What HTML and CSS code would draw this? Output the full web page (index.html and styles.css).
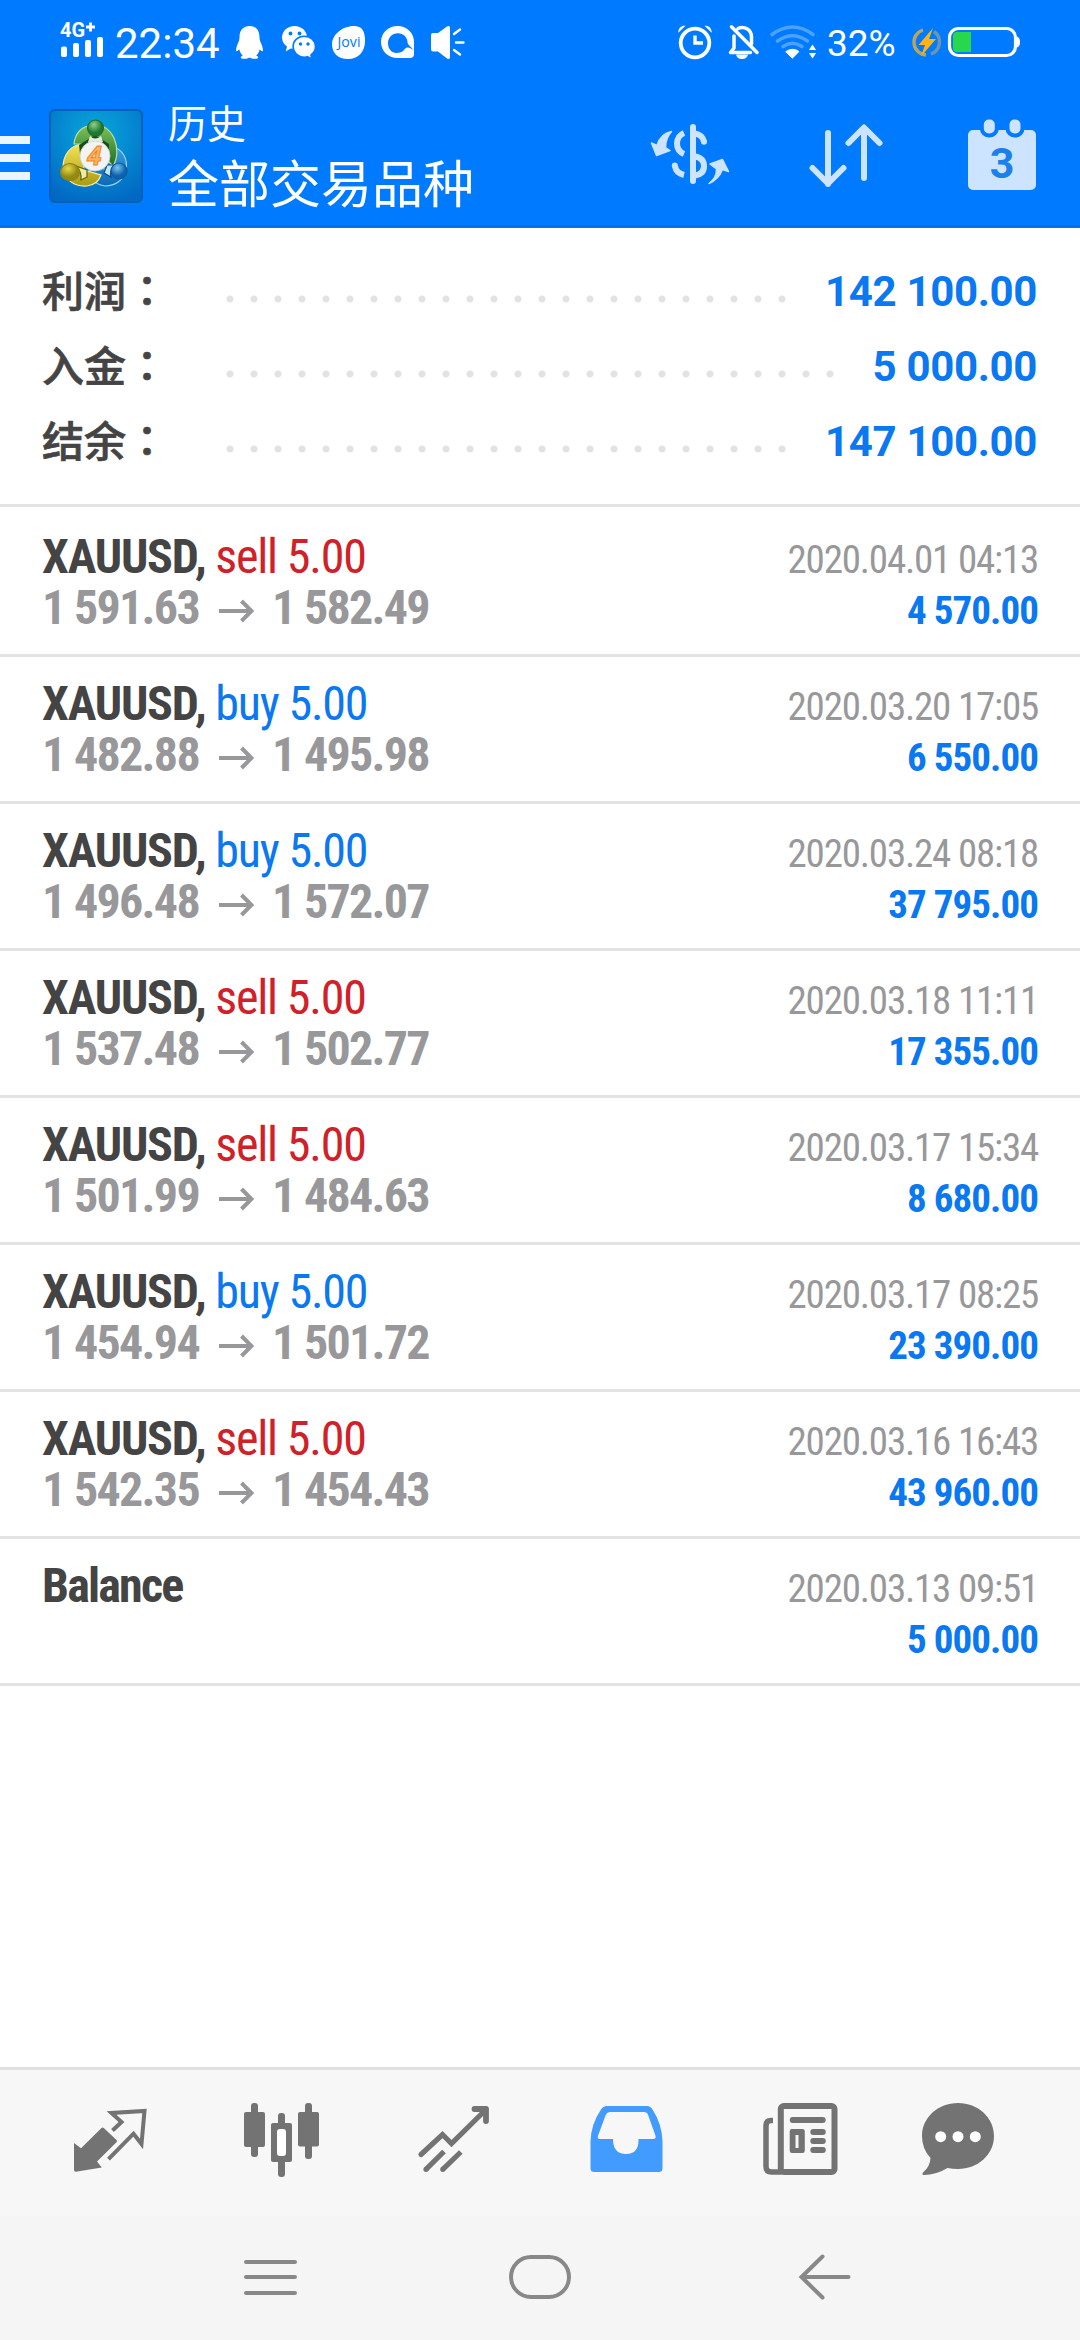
FILE: index.html
```html
<!DOCTYPE html>
<html lang="zh-CN">
<head>
<meta charset="utf-8">
<title>历史</title>
<link rel="stylesheet" href="styles.css">
</head>
<body>
<div class="screen">
<header class="header">
  <div class="status">
    <div class="status-group">
      <svg width="52" height="84" viewBox="60 0 52 84" fill="#fff">
        <text class="net" x="60" y="37">4G</text>
        <path d="M86 27h9M90.500 22.500v9" stroke="#fff" stroke-width="2.800"/>
        <rect x="61" y="46.500" width="6" height="10.500" rx="2"/><rect x="73" y="43" width="6" height="14" rx="2"/><rect x="85" y="40" width="6" height="17" rx="2"/><rect x="97" y="37" width="6" height="20" rx="2"/>
      </svg>
      <span class="clock">22:34</span>
      <svg width="46" height="84" viewBox="226 0 46 84" fill="#fff">
        <path d="M249.500 26c-7 0-10 5-10 11 0 2-.3 3-1 5-1.500 3-2.500 6-2.500 9 1 .8 2.200-.5 3.200-1.800.6 2.600 1.800 4.800 3.600 6.300-2.600 1-2.600 2.800-.3 3.200 2.600.3 5.400 0 7-1.200 1.600 1.200 4.400 1.500 7 1.200 2.300-.4 2.300-2.200-.3-3.200 1.800-1.500 3-3.700 3.600-6.300 1 1.300 2.200 2.600 3.200 1.800 0-3-1-6-2.500-9-.7-2-1-3-1-5 0-6-3-11-10-11z"/>
      </svg>
      <svg width="50" height="84" viewBox="272 0 50 84" fill="#fff">
        <path d="M294.500 26c-7 0-12.500 5-12.500 11.500 0 4 2 7 5 9l-1.300 5 5-3c1.200.3 2.500.5 3.800.5 7 0 12.500-5 12.500-11.500s-5.500-11.500-12.500-11.500z"/>
        <circle cx="290.500" cy="33.500" r="1.900" fill="#007aff"/><circle cx="299.500" cy="33.500" r="1.900" fill="#007aff"/>
        <path d="M304.300 36.200c6.300 0 11.200 4.600 11.200 10.400 0 3.500-1.800 6.400-4.500 8.400l1 4-4.300-2.200c-1.100.3-2.200.4-3.400.4-6.300 0-11.200-4.700-11.200-10.600s4.900-10.400 11.200-10.400z" stroke="#007aff" stroke-width="1.600"/>
        <circle cx="300.500" cy="44" r="1.700" fill="#007aff"/><circle cx="308" cy="44" r="1.700" fill="#007aff"/>
      </svg>
      <svg width="50" height="84" viewBox="322 0 50 84" fill="#fff">
        <path d="M354 26c8 0 11 5 11 15 0 11-7 18-17 18s-16-6-16-15 10-18 22-18z"/>
        <text class="jovi" x="337.500" y="46.500" textLength="23" lengthAdjust="spacingAndGlyphs">Jovi</text>
      </svg>
      <svg width="50" height="84" viewBox="372 0 50 84">
        <path d="M397.500 26c9.500 0 16.500 7 16.500 16v12q0 4-4 4h-12.500c-9.500 0-16.500-7-16.500-16s7-16 16.500-16z" fill="#fff"/>
        <path d="M400 52.500c-7 2-12-2.500-12-9.300 0-6 4.500-10 9.800-10 5.400 0 9.700 4 9.700 8.800 0 3 3 4 6.500 8.500-3-2.500-6.500-4.500-9.200-1.500-1.400 1.600-2.500 3-4.800 3.500z" fill="#007aff"/>
      </svg>
      <svg width="50" height="84" viewBox="422 0 50 84" fill="#fff">
        <path d="M433 33h5l9-6.500q3-1.500 3 1.500v29q0 3-3 1.500l-9-7h-5q-2 0-2-2v-14.500q0-2 2-2z"/>
        <path d="M454 34l6-4.500M456 42.500h7.500M454 50l6 4.500" stroke="#fff" stroke-width="2.400" stroke-linecap="round"/>
      </svg>
    </div>
    <div class="status-group">
      <svg width="48" height="84" viewBox="672 0 48 84" fill="none" stroke="#fff">
        <circle cx="695" cy="43" r="14.300" stroke-width="3.800"/>
        <path d="M695 35.500v7.500h8" stroke-width="3.400"/>
        <path d="M678.300 32c.5-4.500 3-6.600 7.200-6.200l-7.200 7zM711.700 32c-.5-4.500-3-6.600-7.200-6.200l7.200 7z" fill="#fff" stroke="none"/>
      </svg>
      <svg width="46" height="84" viewBox="720 0 46 84" fill="none" stroke="#fff" stroke-width="3.500" stroke-linecap="round" stroke-linejoin="round">
        <path d="M738 28.500c6-3 13.500 1 13.500 8.500v7M734 36v12l-3.500 4.500h20M731.500 26.800l25.500 25.700"/>
        <path d="M736 54.500h12q-1 4.500-6 4.500t-6-4.500z" fill="#fff" stroke="none"/>
      </svg>
      <svg width="58" height="84" viewBox="766 0 58 84" fill="none" stroke="#4da2ff" stroke-width="3.600" stroke-linecap="round">
        <path d="M772 34.500q20.500-15 41 0M777.500 41q15-10.500 30 0M783 46.500q9.500-6.500 19 0"/>
        <path d="M786 51.500q6.500-4.500 13 0l-6.500 6.500z" fill="#fff" stroke="#fff" stroke-width="1"/>
        <path d="M812.500 44.500l3.600 5.500h-7.200zM812.500 58.500l3.600-5.500h-7.200z" fill="#fff" stroke="none"/>
      </svg>
      <span class="percent">32%</span>
      <svg width="116" height="84" viewBox="906 0 116 84" fill="none">
        <path d="M923 30a12.800 12.800 0 0 0 3 25" stroke="#b9a55a" stroke-width="3.400"/>
        <path d="M934 31.500a12.800 12.800 0 0 1-3 22.500" stroke="#6f96a8" stroke-width="3.400"/>
        <path d="M933 28l-14.500 17h6.500l-4 11.500 15-17.500h-7z" fill="#ffb414"/>
        <rect x="949.500" y="28.500" width="66" height="27" rx="9" stroke="#fff" stroke-width="3.200"/>
        <path d="M957 32h14v20h-14q-4 0-4-4v-12q0-4 4-4z" fill="#28d74b"/>
        <path d="M1017 36.500q3 1 3 5.500t-3 5.500z" fill="#fff"/>
      </svg>
    </div>
  </div>
  <div class="toolbar">
    <div class="menu"><i></i><i></i><i></i></div>
    <svg class="logo" width="94" height="94" viewBox="0 0 94 94">
      <defs>
        <radialGradient id="bg" cx=".5" cy=".25" r=".8"><stop offset="0" stop-color="#08a8dc"/><stop offset="1" stop-color="#0268c4"/></radialGradient>
        <linearGradient id="gr" x2="0" y2="1"><stop offset="0" stop-color="#7fc25c"/><stop offset="1" stop-color="#1d6b26"/></linearGradient>
        <linearGradient id="ye" x2="0" y2="1"><stop offset="0" stop-color="#f4e455"/><stop offset="1" stop-color="#a89a14"/></linearGradient>
        <linearGradient id="bl" x2="0" y2="1"><stop offset="0" stop-color="#3b9fe0"/><stop offset="1" stop-color="#0c68b4"/></linearGradient>
        <radialGradient id="gh" cx=".4" cy=".3"><stop offset="0" stop-color="#8fd08a"/><stop offset="1" stop-color="#1f7a30"/></radialGradient>
        <radialGradient id="yh" cx=".4" cy=".3"><stop offset="0" stop-color="#e6d94c"/><stop offset="1" stop-color="#948a10"/></radialGradient>
        <radialGradient id="bh" cx=".4" cy=".3"><stop offset="0" stop-color="#7cc4f0"/><stop offset="1" stop-color="#0d63ae"/></radialGradient>
      </defs>
      <rect x="1" y="1" width="92" height="92" rx="5" fill="url(#bg)" stroke="#0560b8" stroke-width="2"/>
      <g stroke-width="1.200">
        <path d="M62 37c12 3 17 13 15 24-2 10-11 16-21 16-8-1-14-5-19-14l13-4 16 3z" fill="url(#bl)" stroke="#9ad4f5"/>
        <path d="M34 35c-13 1-20 11-20 24 1 12 12 19 24 18 7-1 12-5 14-11l-17-5z" fill="url(#ye)" stroke="#f7f0a0"/>
        <path d="M46 16c-14 0-20 9-21 19l9 0 26 18 4 4c5-8 5-19 1-28-4-8-10-13-19-13z" fill="url(#gr)" stroke="#b5dfa0"/>
        <path d="M30 36l16-10 14 9v14l-8 10-20-6z" fill="#14501c" stroke="none"/>
        <path d="M41 27q5 5 11 0l2 6q-8 3-15 0z" fill="#e2f0dc" stroke="none"/>
        <circle cx="46.500" cy="19" r="8" fill="url(#gh)" stroke="#1f6b2a"/>
        <path d="M27 57q6 6 5 14l6-3v-7z" fill="#f0eaa0" stroke="#5c640c"/>
        <path d="M66 56q-6 5-4 12l-7-4 3-8z" fill="#c4e4f8" stroke="#0b4c88"/>
        <ellipse cx="21" cy="63" rx="9.500" ry="8.500" fill="url(#yh)" stroke="#8d8414"/>
        <circle cx="70" cy="62" r="8" fill="url(#bh)" stroke="#0b5a9e"/>
      </g>
      <circle cx="46" cy="47" r="15" fill="#f3f3f3" stroke="#d2d2d2" stroke-width=".8"/>
      <text class="logo-num" x="45.500" y="56">4</text>
    </svg>
    <div class="titles">
      <div class="subtitle">历史</div>
      <div class="title">全部交易品种</div>
    </div>
    <div class="actions">
      <svg width="80" height="80" viewBox="650 115 80 80" fill="none" stroke="#cce4ff" stroke-width="6">
        <path d="M693 127v54" stroke-linecap="round"/>
        <path d="M695 133.500q8 1.500 9 8.500"/><circle cx="704" cy="141.800" r="3" fill="#cce4ff" stroke="none"/>
        <path d="M684 133q-7 3-7 10.500t7 10.500M695 156.500q9 1.500 9 9.500t-9 9.500M675 166q1 7 9 9"/><circle cx="674.800" cy="165.500" r="3" fill="#cce4ff" stroke="none"/>
        <path d="M671.500 131.500q-11 2-14.500 14l-5.500-2.500 5 12.500 13.500-5-4.500-3q0-9 6-16zM709 183.500q8-6 7.500-14.500l-6.500-5 12.500-4.500 6 12-6-2q-4 10-13.500 14z" fill="#cce4ff" stroke-width="1.500" stroke-linejoin="round"/>
      </svg>
      <svg width="76" height="80" viewBox="808 115 76 80" fill="none" stroke="#cce4ff" stroke-width="6" stroke-linecap="round" stroke-linejoin="round">
        <path d="M828 133v51M812.500 168l15.500 15.500 15.500-15.500M864 178v-50M848.500 143l15.500-15.500 15.500 15.500"/>
      </svg>
      <svg width="72" height="80" viewBox="966 115 72 80" fill="#cce4ff">
        <rect x="968" y="130" width="68" height="60" rx="5"/>
        <g stroke="#007aff" stroke-width="4"><rect x="981.800" y="117.500" width="15" height="18" rx="7"/><rect x="1007.500" y="117.500" width="15" height="18" rx="7"/></g>
        <text class="day" x="1002" y="177.500">3</text>
      </svg>
    </div>
  </div>
</header>

<section class="summary">
  <div class="sum-row"><span class="label">利润<span lang="zh-TW">：</span></span><span class="dots"></span><span class="sum-value">142 100.00</span></div>
  <div class="sum-row"><span class="label">入金<span lang="zh-TW">：</span></span><span class="dots"></span><span class="sum-value">5 000.00</span></div>
  <div class="sum-row"><span class="label">结余<span lang="zh-TW">：</span></span><span class="dots"></span><span class="sum-value">147 100.00</span></div>
</section>

<main class="deals">
  <article class="deal">
    <div class="line"><span class="symbol">XAUUSD, <span class="sell">sell 5.00</span></span><span class="date">2020.04.01 04:13</span></div>
    <div class="line"><span class="prices">1 591.63<svg class="arrow" viewBox="0 0 35 24"><path d="M0 12h32M22.500 2l10 10-10 10"/></svg>1 582.49</span><span class="profit">4 570.00</span></div>
  </article>
  <article class="deal">
    <div class="line"><span class="symbol">XAUUSD, <span class="buy">buy 5.00</span></span><span class="date">2020.03.20 17:05</span></div>
    <div class="line"><span class="prices">1 482.88<svg class="arrow" viewBox="0 0 35 24"><path d="M0 12h32M22.500 2l10 10-10 10"/></svg>1 495.98</span><span class="profit">6 550.00</span></div>
  </article>
  <article class="deal">
    <div class="line"><span class="symbol">XAUUSD, <span class="buy">buy 5.00</span></span><span class="date">2020.03.24 08:18</span></div>
    <div class="line"><span class="prices">1 496.48<svg class="arrow" viewBox="0 0 35 24"><path d="M0 12h32M22.500 2l10 10-10 10"/></svg>1 572.07</span><span class="profit">37 795.00</span></div>
  </article>
  <article class="deal">
    <div class="line"><span class="symbol">XAUUSD, <span class="sell">sell 5.00</span></span><span class="date">2020.03.18 11:11</span></div>
    <div class="line"><span class="prices">1 537.48<svg class="arrow" viewBox="0 0 35 24"><path d="M0 12h32M22.500 2l10 10-10 10"/></svg>1 502.77</span><span class="profit">17 355.00</span></div>
  </article>
  <article class="deal">
    <div class="line"><span class="symbol">XAUUSD, <span class="sell">sell 5.00</span></span><span class="date">2020.03.17 15:34</span></div>
    <div class="line"><span class="prices">1 501.99<svg class="arrow" viewBox="0 0 35 24"><path d="M0 12h32M22.500 2l10 10-10 10"/></svg>1 484.63</span><span class="profit">8 680.00</span></div>
  </article>
  <article class="deal">
    <div class="line"><span class="symbol">XAUUSD, <span class="buy">buy 5.00</span></span><span class="date">2020.03.17 08:25</span></div>
    <div class="line"><span class="prices">1 454.94<svg class="arrow" viewBox="0 0 35 24"><path d="M0 12h32M22.500 2l10 10-10 10"/></svg>1 501.72</span><span class="profit">23 390.00</span></div>
  </article>
  <article class="deal">
    <div class="line"><span class="symbol">XAUUSD, <span class="sell">sell 5.00</span></span><span class="date">2020.03.16 16:43</span></div>
    <div class="line"><span class="prices">1 542.35<svg class="arrow" viewBox="0 0 35 24"><path d="M0 12h32M22.500 2l10 10-10 10"/></svg>1 454.43</span><span class="profit">43 960.00</span></div>
  </article>
  <article class="deal">
    <div class="line"><span class="symbol balance">Balance</span><span class="date">2020.03.13 09:51</span></div>
    <div class="line"><span class="prices">&nbsp;</span><span class="profit">5 000.00</span></div>
  </article>
</main>

<nav class="tabs">
  <svg viewBox="21 2070 173 146">
    <path d="M74 2143l7 5.300 20.500-20.300q1.200-1 2.300 0l12.700 12q1 1.200 0 2.200l-19.500 19.300 4.800 6-26 4.300q-1.800 0-1.800-1.800z" fill="#737373"/>
    <path d="M112.500 2130.500l9-8.500-10-9 33-2-3 33-8-10.300-25 25.500" fill="none" stroke="#737373" stroke-width="4"/>
  </svg>
  <svg viewBox="194 2070 173 146" fill="#737373">
    <rect x="251" y="2103" width="7" height="54" rx="3"/><rect x="244" y="2112" width="21" height="35" rx="2"/>
    <rect x="278" y="2113" width="7" height="64" rx="3"/><rect x="271" y="2123" width="21" height="39" rx="2"/><rect x="277" y="2129" width="9" height="27" rx="3" fill="#fff"/>
    <rect x="305" y="2103" width="7" height="56" rx="3"/><rect x="298" y="2112" width="21" height="34.500" rx="2"/>
  </svg>
  <svg viewBox="367 2070 173 146" fill="none" stroke="#737373" stroke-width="5.200">
    <path d="M421 2154.500l21.500-20 9 9 34.500-34" stroke-linecap="round"/>
    <path d="M474.500 2109h11.500v12" stroke-width="5.800" stroke-linecap="round" stroke-linejoin="round"/>
    <path d="M426 2169.300l18-17.800M442.800 2169.300l18-17.300"/><path d="M426 2169.300h.01M442.800 2169.300h.01" stroke-linecap="round"/>
  </svg>
  <svg viewBox="540 2070 173 146">
    <path fill-rule="evenodd" fill="#429bff" d="M607 2106h40q3.500 0 5.500 3.500 9.500 14.500 10 32v27q0 3.500-4 3.500h-64q-4 0-4-3.500v-27q.5-17.500 10.500-32 2-3.500 6-3.500zM610 2112q-3 0-4.200 2.800l-7.600 20.400q-1.400 3.800 1.300 3.800h13.500q0 15 13 15t12.500-15h14.500q3.800 0 2.300-3.800l-7.300-20.400q-1-2.800-4-2.800z"/>
  </svg>
  <svg viewBox="713 2070 173 146" fill="#737373">
    <rect x="780.800" y="2106" width="53.700" height="66" rx="3" fill="none" stroke="#737373" stroke-width="6"/>
    <path d="M773 2120.500h-2q-5 0-5 5v41q0 5.500 5.500 5.500h10" fill="none" stroke="#737373" stroke-width="5.500"/>
    <rect x="789.700" y="2117" width="36" height="6" rx="3"/>
    <path fill-rule="evenodd" d="M792 2129h10.500q2.300 0 2.300 2.300v19.400q0 2.300-2.300 2.300h-10.500q-2.300 0-2.300-2.300v-19.400q0-2.300 2.300-2.300zM795.500 2135v13h3v-13z"/>
    <rect x="810.300" y="2129" width="15.500" height="6" rx="3"/><rect x="810.300" y="2138" width="15.500" height="6" rx="3"/><rect x="810.300" y="2147" width="15.500" height="6" rx="3"/>
  </svg>
  <svg viewBox="886 2070 173 146" fill="#737373">
    <path d="M958 2103c20 0 36 14.500 36 33s-16 33-36 33q-5.500 0-10.500-1-11.500 7-23.500 7-3-.5-.5-3 6.500-5.500 7-14-8.500-9-8.500-22c0-18.500 16-33 36-33z"/>
    <g fill="#fff"><circle cx="940.700" cy="2136.700" r="5.500"/><circle cx="958" cy="2136.700" r="5.500"/><circle cx="975.300" cy="2136.700" r="5.500"/></g>
  </svg>
</nav>

<div class="sysnav">
  <svg viewBox="0 0 60 50"><path d="M7 10h49M7 25h49M7 41h49"/></svg>
  <svg viewBox="0 0 70 50"><rect x="6" y="5" width="58" height="40" rx="20"/></svg>
  <svg viewBox="0 0 60 50"><path d="M26.500 4.500l-21 20.500 21 20.500M6 25h46.500"/></svg>
</div>
</div>
</body>
</html>
```
FILE: styles.css
```css
* { box-sizing: border-box; }
body { margin: 0; background: #fff; }
svg { display: block; flex: none; }

.screen {
  display: flex;
  flex-direction: column;
  width: 1080px;
  height: 2340px;
  overflow: hidden;
  font-family: Roboto, "Noto Sans CJK SC", sans-serif;
}

/* Header */
.header {
  height: 228px;
  background: #007aff;
  border-bottom: 3px solid #0870e0;
  color: #fff;
}
.status {
  display: flex;
  justify-content: space-between;
  height: 84px;
  padding: 0 58px 0 60px;
}
.status-group { display: flex; align-items: center; }
.net { font: 700 20px Roboto, sans-serif; }
.jovi { font: 400 14px "Open Sans", sans-serif; fill: #007aff; }
.clock { width: 114px; padding: 3px 0 0 3px; font-size: 42px; line-height: 84px; }
.percent { width: 82px; padding: 3px 0 0 3px; font-size: 37px; line-height: 84px; }

.toolbar { display: flex; align-items: flex-start; height: 141px; padding-right: 42px; }
.menu { display: flex; flex-direction: column; gap: 10px; width: 30px; margin-top: 52px; }
.menu i { height: 8px; background: #ebf5ff; }
.logo { margin: 25px 0 0 19px; }
.logo-num {
  font: italic 700 26px "Open Sans", sans-serif;
  text-anchor: middle;
  fill: #ffb25a;
  stroke: #e8862a;
  stroke-width: 1;
}
.titles { margin: 7px 0 0 25px; font-family: "Noto Sans CJK SC", sans-serif; }
.subtitle { font-size: 39px; line-height: 60px; }
.title { font-size: 51px; line-height: 60px; white-space: nowrap; }
.actions { display: flex; margin: 31px 0 0 auto; }
.actions svg + svg { margin-left: 78px; }
.actions svg:last-child { margin-left: 82px; }
.day { font: 700 43px Roboto, sans-serif; text-anchor: middle; fill: #1c7fea; }

/* Totals */
.summary {
  height: 279px;
  padding: 26px 43px 0 42px;
  border-bottom: 3px solid #e3e3e3;
}
.sum-row { display: flex; height: 75px; }
.label {
  width: 176px;
  font: 500 42px/69px "Noto Sans CJK SC", sans-serif;
  color: #444;
  -webkit-text-stroke: 0.7px #444;
}
.label span { font-family: "Noto Sans CJK TC", sans-serif; }
.dots {
  flex: 1;
  height: 24px;
  margin: 33px 32px 0 0;
  background: radial-gradient(circle at center, #e2e2e2 3px, transparent 4px) 0 0 / 24px 24px repeat-x;
}
.sum-value { font: 700 42px/75px Roboto, sans-serif; letter-spacing: -0.35px; color: #0a78f0; }

/* Deals */
.deals { flex: 1; padding-top: 3px; font-family: "Roboto Condensed", sans-serif; }
.deal { height: 147px; padding: 21px 42px; border-bottom: 3px solid #e3e3e3; }
.line {
  display: flex;
  justify-content: space-between;
  align-items: baseline;
  height: 51px;
  line-height: 51px;
  white-space: nowrap;
}
.symbol { font-size: 48px; font-weight: 700; color: #444; letter-spacing: -1.2px; }
.balance { letter-spacing: -1.8px; }
.sell, .buy { font-weight: 400; }
.sell { color: #d02028; }
.buy { color: #0a78f0; }
.prices { font-size: 48px; font-weight: 700; color: #98989b; letter-spacing: -1.7px; }
.arrow {
  display: inline-block;
  width: 35px;
  height: 24px;
  margin: 0 18px 0 20px;
  vertical-align: 1px;
  fill: none;
  stroke: #98989b;
  stroke-width: 4;
}
.date { font-size: 39px; color: #98989b; letter-spacing: -1.2px; }
.profit { font-size: 39px; font-weight: 700; color: #0a78f0; letter-spacing: -0.95px; }

/* Bottom bars */
.tabs {
  display: flex;
  height: 149px;
  padding-left: 21px;
  border-top: 3px solid #e0e0e0;
  background: #f7f7f7;
}
.tabs svg { width: 173px; height: 146px; }
.sysnav {
  display: grid;
  grid-template-columns: 60px 70px 60px;
  column-gap: 206px;
  height: 124px;
  padding: 36px 0 0 239px;
  background: #f5f5f5;
}
.sysnav svg { height: 50px; fill: none; stroke: #888; stroke-width: 4; stroke-linecap: round; }
.sysnav svg:last-child { margin-left: 15px; }
```
